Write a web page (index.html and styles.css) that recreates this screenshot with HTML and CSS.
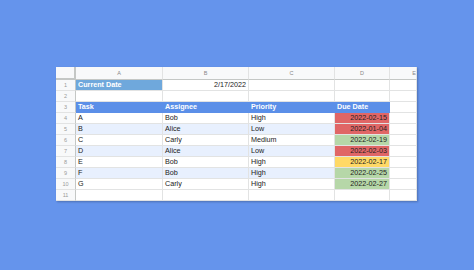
FILE: index.html
```html
<!DOCTYPE html>
<html lang="en">

<head>
    <meta charset="UTF-8">
    <title>Due Dates</title>
    <link rel="stylesheet" href="styles.css">
</head>

<body>
    <main class="sheet">
        <!-- column letters -->
        <div class="cell hd corner"></div>
        <div class="cell hd">A</div>
        <div class="cell hd">B</div>
        <div class="cell hd">C</div>
        <div class="cell hd">D</div>
        <div class="cell hd edge">E</div>

        <div class="cell rn">1</div>
        <div class="cell cur">Current Date</div>
        <div class="cell num">2/17/2022</div>
        <div class="cell"></div>
        <div class="cell"></div>
        <div class="cell"></div>

        <div class="cell rn">2</div>
        <div class="cell"></div>
        <div class="cell"></div>
        <div class="cell"></div>
        <div class="cell"></div>
        <div class="cell"></div>

        <div class="cell rn">3</div>
        <div class="cell th">Task</div>
        <div class="cell th">Assignee</div>
        <div class="cell th">Priority</div>
        <div class="cell th">Due Date</div>
        <div class="cell"></div>

        <div class="cell rn">4</div>
        <div class="cell">A</div>
        <div class="cell">Bob</div>
        <div class="cell">High</div>
        <div class="cell num red">2022-02-15</div>
        <div class="cell"></div>

        <div class="cell rn">5</div>
        <div class="cell alt">B</div>
        <div class="cell alt">Alice</div>
        <div class="cell alt">Low</div>
        <div class="cell num red">2022-01-04</div>
        <div class="cell"></div>

        <div class="cell rn">6</div>
        <div class="cell">C</div>
        <div class="cell">Carly</div>
        <div class="cell">Medium</div>
        <div class="cell num green">2022-02-19</div>
        <div class="cell"></div>

        <div class="cell rn">7</div>
        <div class="cell alt">D</div>
        <div class="cell alt">Alice</div>
        <div class="cell alt">Low</div>
        <div class="cell num red">2022-02-03</div>
        <div class="cell"></div>

        <div class="cell rn">8</div>
        <div class="cell">E</div>
        <div class="cell">Bob</div>
        <div class="cell">High</div>
        <div class="cell num yellow">2022-02-17</div>
        <div class="cell"></div>

        <div class="cell rn">9</div>
        <div class="cell alt">F</div>
        <div class="cell alt">Bob</div>
        <div class="cell alt">High</div>
        <div class="cell num green">2022-02-25</div>
        <div class="cell"></div>

        <div class="cell rn">10</div>
        <div class="cell">G</div>
        <div class="cell">Carly</div>
        <div class="cell">High</div>
        <div class="cell num green">2022-02-27</div>
        <div class="cell"></div>

        <div class="cell rn">11</div>
        <div class="cell"></div>
        <div class="cell"></div>
        <div class="cell"></div>
        <div class="cell"></div>
        <div class="cell"></div>
    </main>
</body>

</html>
```

FILE: styles.css
```css
body {
    margin: 0;
    height: 270px;
    background-color: #6594ec;
    padding: 67px 0 0 56px;
    box-sizing: border-box;
    font-family: "Liberation Sans", Arial, sans-serif;
}

.sheet {
    width: 361px;
    display: grid;
    grid-template-columns: 20px 87px 86px 86px 55px 27px;
    grid-template-rows: 13px repeat(11, 11px);
    background-color: white;
    box-shadow: 1px 1px 2px rgba(0, 0, 0, .25);
    overflow: hidden;
}

.cell {
    box-sizing: border-box;
    border-right: 1px solid #e2e3e3;
    border-bottom: 1px solid #e2e3e3;
    font-size: 7.2px;
    line-height: 10px;
    padding: 0 2px;
    color: #222;
    white-space: nowrap;
    overflow: hidden;
}

.hd {
    background-color: #f8f9fa;
    color: #888;
    font-size: 5.5px;
    line-height: 12px;
    text-align: center;
    border-bottom-color: #c4c7c5;
}

.corner {
    border-right: 2px solid #c4c7c5;
    border-bottom: 2px solid #c4c7c5;
}

.edge {
    text-align: right;
    padding-right: 0;
}

.rn {
    background-color: #f8f9fa;
    color: #999;
    font-size: 5.5px;
    text-align: center;
    border-right-color: #c4c7c5;
}

.num {
    text-align: right;
}

.cur {
    background-color: #6fa8dc;
    color: white;
    font-weight: bold;
}

.th {
    background-color: #5b8fe8;
    color: white;
    font-weight: bold;
    border-color: #5b8fe8;
}

.alt {
    background-color: #e8f0fe;
}

.red {
    background-color: #e06666;
}

.green {
    background-color: #b6d7a8;
}

.yellow {
    background-color: #ffd966;
}
```
